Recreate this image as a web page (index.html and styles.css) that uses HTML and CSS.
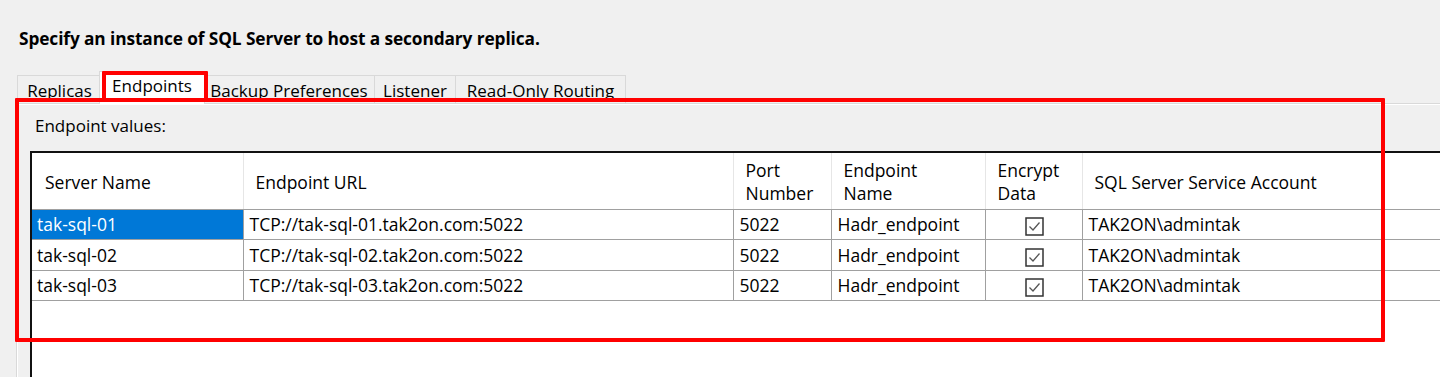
FILE: index.html
```html
<!DOCTYPE html>
<html lang="en">
<head>
    <meta charset="UTF-8">
    <meta name="viewport" content="width=device-width, initial-scale=1.0">
    <title>Add Replica - Endpoints</title>
    <link rel="stylesheet" href="styles.css">
</head>
<body>
    <div class="page">
        <h1 class="title">Specify an instance of SQL Server to host a secondary replica.</h1>

        <div class="tabs">
            <div class="tab tab-replicas">Replicas</div>
            <div class="tab tab-endpoints selected">Endpoints</div>
            <div class="tab tab-backup">Backup Preferences</div>
            <div class="tab tab-listener">Listener</div>
            <div class="tab tab-routing">Read-Only Routing</div>
        </div>

        <div class="panel">
            <div class="panel-label">Endpoint values:</div>
            <div class="grid">
                <table>
                    <colgroup>
                        <col class="c-server">
                        <col class="c-url">
                        <col class="c-port">
                        <col class="c-name">
                        <col class="c-encrypt">
                        <col class="c-account">
                    </colgroup>
                    <thead>
                        <tr>
                            <th>Server Name</th>
                            <th>Endpoint URL</th>
                            <th>Port<br>Number</th>
                            <th>Endpoint<br>Name</th>
                            <th>Encrypt<br>Data</th>
                            <th>SQL Server Service Account</th>
                        </tr>
                    </thead>
                    <tbody>
                        <tr>
                            <td class="active">tak-sql-01</td>
                            <td>TCP://tak-sql-01.tak2on.com:5022</td>
                            <td>5022</td>
                            <td>Hadr_endpoint</td>
                            <td class="check"><svg width="19" height="19" viewBox="0 0 19 19"><rect x="1" y="1" width="17" height="17" fill="#fff" stroke="#333" stroke-width="1.5"/><polyline points="4.5,9.5 8,13 14.5,5.5" fill="none" stroke="#555" stroke-width="1.3"/></svg></td>
                            <td>TAK2ON\admintak</td>
                        </tr>
                        <tr>
                            <td>tak-sql-02</td>
                            <td>TCP://tak-sql-02.tak2on.com:5022</td>
                            <td>5022</td>
                            <td>Hadr_endpoint</td>
                            <td class="check"><svg width="19" height="19" viewBox="0 0 19 19"><rect x="1" y="1" width="17" height="17" fill="#fff" stroke="#333" stroke-width="1.5"/><polyline points="4.5,9.5 8,13 14.5,5.5" fill="none" stroke="#555" stroke-width="1.3"/></svg></td>
                            <td>TAK2ON\admintak</td>
                        </tr>
                        <tr>
                            <td>tak-sql-03</td>
                            <td>TCP://tak-sql-03.tak2on.com:5022</td>
                            <td>5022</td>
                            <td>Hadr_endpoint</td>
                            <td class="check"><svg width="19" height="19" viewBox="0 0 19 19"><rect x="1" y="1" width="17" height="17" fill="#fff" stroke="#333" stroke-width="1.5"/><polyline points="4.5,9.5 8,13 14.5,5.5" fill="none" stroke="#555" stroke-width="1.3"/></svg></td>
                            <td>TAK2ON\admintak</td>
                        </tr>
                    </tbody>
                </table>
            </div>
        </div>

        <!-- red annotation boxes drawn over the screenshot -->
        <div class="mark mark-tab"></div>
        <div class="mark mark-panel"></div>
    </div>
</body>
</html>
```

FILE: styles.css
```css
html, body { margin: 0; padding: 0; }
body { background: #f0f0f0; font-family: "Open Sans", "Noto Sans", Arial, sans-serif; font-size: 17.5px; color: #000; overflow: hidden; width: 1440px; height: 377px; }
.page { position: relative; height: 377px; overflow: hidden; }
.title { margin: 0; padding: 27px 0 0 19px; font-size: 17.3px; font-weight: 700; line-height: 23px; height: 44px; letter-spacing: -0.1px; }

.tabs { display: flex; align-items: flex-end; height: 32px; margin-left: 17px; position: relative; z-index: 2; font-size: 17px; }
.tab { height: 28px; line-height: 30px; border: 1px solid #d9d9d9; border-bottom: none; background: #f0f0f0; box-sizing: border-box; text-align: center; white-space: nowrap; margin-right: -1px; }
.tab.selected { height: 33px; line-height: 28px; background: #fff; margin: 0 -2px -1px -2px; position: relative; z-index: 3; }
.tab-replicas { width: 85px; }
.tab-endpoints { width: 106px; }
.tab-backup { width: 172px; }
.tab-listener { width: 82px; }
.tab-routing { width: 171px; }

.panel { margin-left: 16px; border-top: 1px solid #d9d9d9; border-left: 1px solid #d9d9d9; box-shadow: inset 1px 1px 0 #fff; height: 274px; padding: 11px 0 0 13px; box-sizing: border-box; }
.panel-label { padding-left: 5px; line-height: 22px; height: 36px; font-size: 17px; }

.grid { background: #fff; border-top: 2px solid #111; border-left: 2px solid #111; height: 240px; overflow: hidden; }
.grid table { border-collapse: collapse; table-layout: fixed; width: 1460px; }
.c-server { width: 211px; }
.c-url { width: 490px; }
.c-port { width: 98px; }
.c-name { width: 154px; }
.c-encrypt { width: 97px; }
.c-account { width: 410px; }

.grid th { font-weight: 400; text-align: left; vertical-align: middle; height: 56px; padding: 3px 0 0 12px; box-sizing: border-box; line-height: 23px; border-left: 1px solid #e6e6e6; border-bottom: 1px solid #a0a0a0; }
.grid th:first-child { border-left: none; padding-left: 13px; }
.grid td { height: 29.5px; padding: 0 0 0 6px; line-height: 28px; border: 1px solid #a0a0a0; border-top: none; white-space: nowrap; }
.grid td:first-child { border-left: none; padding-left: 5px; }
.grid td.active { background: #0078d7; color: #fff; }
.grid td.check { text-align: center; padding: 0; }
.grid td.check svg { display: inline-block; vertical-align: middle; margin-left: 1px; }

.mark { position: absolute; border: 4px solid #ff0000; border-radius: 1px; box-sizing: border-box; pointer-events: none; z-index: 5; }
.mark-tab { left: 102px; top: 71px; width: 106px; height: 31px; }
.mark-panel { left: 15px; top: 98px; width: 1370px; height: 244px; }
```
